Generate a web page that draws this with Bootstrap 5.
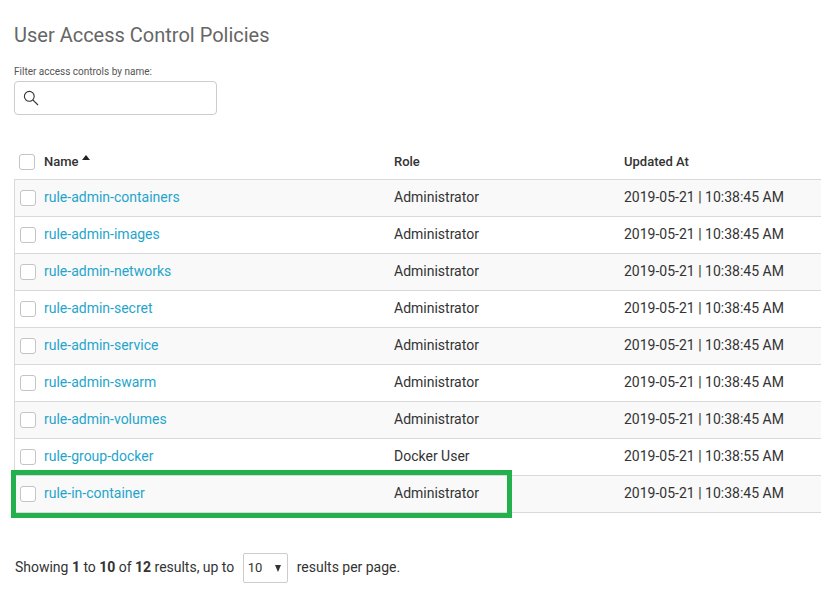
<!DOCTYPE html>
<html lang="en">
<head>
<meta charset="utf-8">
<title>User Access Control Policies</title>
<link href="https://cdn.jsdelivr.net/npm/bootstrap@5.3.0/dist/css/bootstrap.min.css" rel="stylesheet">
<style>
body{font-family:Roboto,"Liberation Sans",sans-serif;font-size:14px;color:#333;overflow:hidden}
.page{padding:23px 0 0 14px}
.page-title{font-size:20px;line-height:24px;font-weight:400;color:#666;margin-bottom:17px}
.filter-label{font-size:10px;line-height:15px;color:#555;margin-bottom:2px}
.search-box{width:203px;height:34px;border-color:#ccc!important;border-radius:4px;padding-left:8px;margin-bottom:29px}
.search-box input{width:150px;outline:0}
.policies{table-layout:fixed;border-collapse:separate;border-spacing:0}
.policies>:not(caption)>*>*{padding:0;height:37px;line-height:20px;box-shadow:none;border-bottom:1px solid #d9d9d9;color:#333;vertical-align:middle;white-space:nowrap;background:#fff}
.policies thead th{height:36px;font-size:13px;font-weight:500}
.policies>tbody>tr>td{padding-bottom:2px}
.policies>tbody>tr:nth-child(odd)>td{background:#f9f9f9}
.policies tbody td:first-child{border-left:1px solid #d9d9d9}
.policies a{color:#1fa5cc}
.col-check{width:30px}.col-name{width:350px}.col-role{width:230px}
.policies .form-check-input{width:16px;height:16px;border:1px solid #c4c4c4;border-radius:3px;margin:1px 0 0 5px;float:none;display:block}
.sort-arrow{width:8px;height:5px;margin:0 0 10px 3px}
.highlight{left:-3px;bottom:-5px;width:501px;height:48px;border:5px solid #22b14c;pointer-events:none}
.pager{margin-top:40px;padding-left:1px;height:30px;letter-spacing:-.015px}
.pager b{font-weight:700}
.pager-text{margin-top:-2px}
.page-size{width:45px;height:30px;border-color:#ccc!important;border-radius:2px;padding:0 6px 0 4px;font-size:13px;margin:0 9px 0 8.5px}
</style>
</head>
<body>
<main class="page">
<h1 class="page-title">User Access Control Policies</h1>
<label class="filter-label d-block" for="filter">Filter access controls by name:</label>
<div class="search-box border d-flex align-items-center">
<svg width="16" height="16" viewBox="0 0 16 16" fill="none" stroke="#333" stroke-width="1.1"><circle cx="6.3" cy="6.3" r="4.9"/><path d="M9.8 9.8 15 15"/></svg>
<input id="filter" class="border-0 bg-transparent" type="text">
</div>
<div class="position-relative">
<table class="table policies mb-0">
<colgroup><col class="col-check"><col class="col-name"><col class="col-role"><col></colgroup>
<thead><tr><th><input class="form-check-input" type="checkbox" aria-label="Select all"></th><th>Name<svg class="sort-arrow" viewBox="0 0 8 5"><path d="M0 5 4 0l4 5z" fill="#222"/></svg></th><th>Role</th><th>Updated At</th></tr></thead>
<tbody>
<tr><td><input class="form-check-input" type="checkbox"></td><td><a class="text-decoration-none" href="#">rule-admin-containers</a></td><td>Administrator</td><td>2019-05-21 | 10:38:45 AM</td></tr>
<tr><td><input class="form-check-input" type="checkbox"></td><td><a class="text-decoration-none" href="#">rule-admin-images</a></td><td>Administrator</td><td>2019-05-21 | 10:38:45 AM</td></tr>
<tr><td><input class="form-check-input" type="checkbox"></td><td><a class="text-decoration-none" href="#">rule-admin-networks</a></td><td>Administrator</td><td>2019-05-21 | 10:38:45 AM</td></tr>
<tr><td><input class="form-check-input" type="checkbox"></td><td><a class="text-decoration-none" href="#">rule-admin-secret</a></td><td>Administrator</td><td>2019-05-21 | 10:38:45 AM</td></tr>
<tr><td><input class="form-check-input" type="checkbox"></td><td><a class="text-decoration-none" href="#">rule-admin-service</a></td><td>Administrator</td><td>2019-05-21 | 10:38:45 AM</td></tr>
<tr><td><input class="form-check-input" type="checkbox"></td><td><a class="text-decoration-none" href="#">rule-admin-swarm</a></td><td>Administrator</td><td>2019-05-21 | 10:38:45 AM</td></tr>
<tr><td><input class="form-check-input" type="checkbox"></td><td><a class="text-decoration-none" href="#">rule-admin-volumes</a></td><td>Administrator</td><td>2019-05-21 | 10:38:45 AM</td></tr>
<tr><td><input class="form-check-input" type="checkbox"></td><td><a class="text-decoration-none" href="#">rule-group-docker</a></td><td>Docker User</td><td>2019-05-21 | 10:38:55 AM</td></tr>
<tr><td><input class="form-check-input" type="checkbox"></td><td><a class="text-decoration-none" href="#">rule-in-container</a></td><td>Administrator</td><td>2019-05-21 | 10:38:45 AM</td></tr>
</tbody>
</table>
<div class="highlight position-absolute"></div>
</div>
<div class="pager d-flex align-items-center">
<span class="pager-text">Showing <b>1</b> to <b>10</b> of <b>12</b> results, up to</span>
<div class="page-size border d-flex align-items-center justify-content-between" role="button"><span>10</span><svg width="6" height="7" viewBox="0 0 6 7"><path d="M0 0h6L3 7z" fill="#333"/></svg></div>
<span class="pager-text">results per page.</span>
</div>
</main>
<script src="https://cdn.jsdelivr.net/npm/bootstrap@5.3.0/dist/js/bootstrap.bundle.min.js"></script>
</body>
</html>
